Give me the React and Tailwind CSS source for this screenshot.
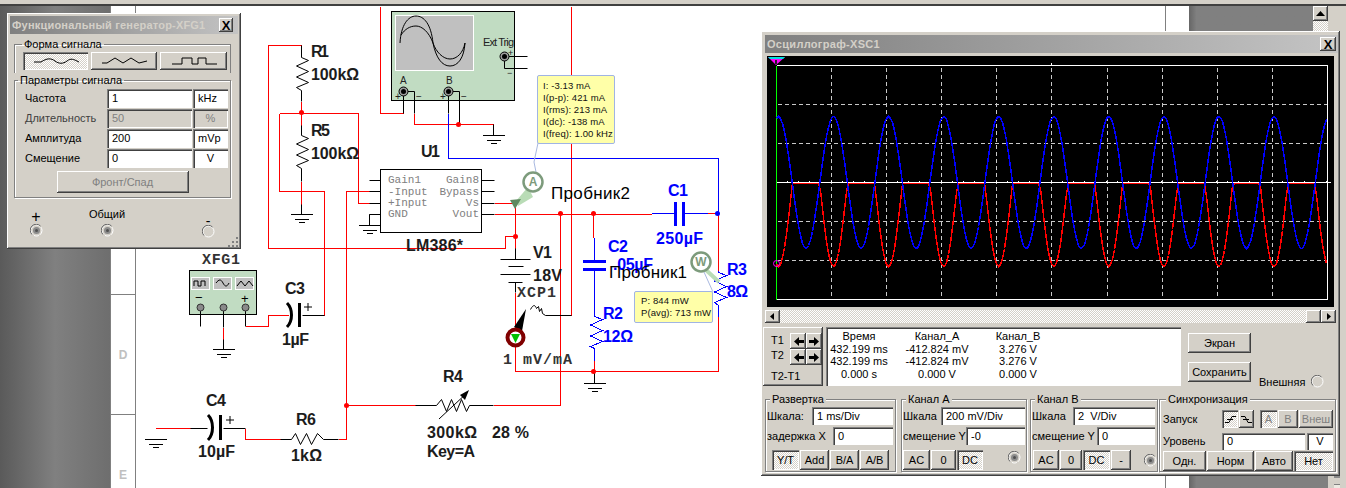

const raised = "shadow-[inset_-1px_-1px_0_#404040,inset_1px_1px_0_#fff,inset_-2px_-2px_0_#808080]";
const sunk = "shadow-[inset_1px_1px_0_#808080,inset_2px_2px_0_#404040,inset_-1px_-1px_0_#fff]";
const hatch = "bg-[repeating-conic-gradient(#ffffff_0_25%,#d4d0c8_0_50%)] bg-size-[2px_2px]";

function Btn({ w, h = "h-[20px]", on, dim, children }) {
  return (
    <div
      className={`${w} ${h} shrink-0 flex items-center justify-center ${on ? `${hatch} ${sunk}` : `bg-[#d4d0c8] ${raised}`} ${dim ? "text-[#808080]" : "text-black"}`}
    >
      {children}
    </div>
  );
}

function Field({ w, h = "h-[18px]", dim, center, children }) {
  return (
    <div
      className={`${w} ${h} shrink-0 flex items-center whitespace-pre ${center ? "justify-center" : "pl-[5px]"} ${sunk} ${dim ? "bg-[#d4d0c8] text-[#808080]" : "bg-white text-black"}`}
    >
      {children}
    </div>
  );
}

function Group({ title, className, children }) {
  return (
    <fieldset className={`min-w-0 shrink-0 border border-[#808080] shadow-[inset_1px_1px_0_#fff,1px_1px_0_#fff] pb-0 ${className}`}>
      <legend className="ml-[3px] px-[2px] h-[12px] leading-[12px] bg-[#d4d0c8]">{title}</legend>
      {children}
    </fieldset>
  );
}

function Terminal({ open }) {
  return (
    <svg width="13" height="13" viewBox="0 0 13 13">
      <circle cx="6.5" cy="6.5" r="5.5" fill="#d4d0c8" stroke="#fff" strokeDasharray={open ? "none" : "5 1"} />
      {!open && <circle cx="6.5" cy="6.5" r="3.5" fill="#8c8c8c" />}
      {!open && <circle cx="6.5" cy="6.5" r="1.5" fill="#505050" />}
      <path d="M2 10.5A5.5 5.5 0 0 1 10.5 2" fill="none" stroke="#666" />
    </svg>
  );
}

function Arrow({ right }) {
  return (
    <svg width="11" height="9" viewBox="0 0 11 9">
      <path d={right ? "M0 3h5V0l5 4.5L5 9V6H0z" : "M11 3H6V0L1 4.5 6 9V6h5z"} fill="#000" />
    </svg>
  );
}

function WaveForm({ d }) {
  return (
    <svg width="46" height="10" viewBox="0 0 46 10">
      <path d={d} fill="none" stroke="#000" />
    </svg>
  );
}

function GenRow({ label, value, unit, dim, unitCenter }) {
  return (
    <div className="flex items-center h-[19px] mb-[1px]">
      <span className={`w-[82px] ml-[10px] whitespace-nowrap ${dim ? "text-[#404040]" : ""}`}>{label}</span>
      <Field w="w-[85px]" h="h-[19px]" dim={dim}>{value}</Field>
      <Field w="w-[35px] ml-[1px]" h="h-[19px]" dim={dim} center={unitCenter}>{unit}</Field>
    </div>
  );
}

function GeneratorWindow() {
  return (
    <section className={`absolute left-[7px] top-[13px] w-[234px] h-[236px] p-[3px] bg-[#d4d0c8] flex flex-col text-[11px] text-black ${raised} font-['Liberation_Sans',sans-serif]`}>
      <header className="h-[18px] shrink-0 flex items-center justify-between pl-[2px] pr-[5px] bg-linear-to-r from-[#808080] to-[#c4c4c4]">
        <span className="text-[#d4d0c8] font-bold text-[11px] tracking-[0.2px] whitespace-nowrap">Функциональный генератор-XFG1</span>
        <Btn w="w-[14px]" h="h-[14px]"><span className="font-bold text-[13px] leading-none">X</span></Btn>
      </header>
      <div className="mt-[4px] ml-[4px] mr-[7px]">
        <fieldset className="min-w-0 border border-b-0 border-[#808080] shadow-[inset_1px_1px_0_#fff] pl-[8px] pr-[3px] h-[35px]">
          <legend className="ml-[-1px] px-[2px] h-[13px] leading-[13px]">Форма сигнала</legend>
          <div className="flex gap-[3px] pt-[1px]">
            <Btn w="w-[65px]" h="h-[18px]" on><WaveForm d="M1 6H8C14 2 18 2 22 5S30 8 34 5 40 3 46 6" /></Btn>
            <Btn w="w-[66px]" h="h-[18px]"><WaveForm d="M1 7H6L14 2 22 7 30 2 38 7 46 5" /></Btn>
            <Btn w="w-[67px]" h="h-[18px]"><WaveForm d="M1 8H11V2H21V8H27V2H35V8H46" /></Btn>
          </div>
        </fieldset>
        <fieldset className="min-w-0 border border-[#808080] shadow-[inset_1px_1px_0_#fff,1px_1px_0_#fff] h-[125px]">
          <legend className="ml-[3px] px-[2px] h-[14px] leading-[14px]">Параметры сигнала</legend>
          <div className="pt-[2px]">
            <GenRow label="Частота" value="1" unit="kHz" />
            <GenRow label="Длительность" value="50" unit="%" dim unitCenter />
            <GenRow label="Амплитуда" value="200" unit="mVp" />
            <GenRow label="Смещение" value="0" unit="V" unitCenter />
          </div>
          <div className="flex justify-center mt-[3px] pr-[0px]">
            <Btn w="w-[132px]" h="h-[22px]" dim>Фронт/Спад</Btn>
          </div>
        </fieldset>
      </div>
      <div className="flex items-end mt-[9px] h-[30px] shrink-0">
        <div className="flex flex-col items-center w-[14px] ml-[19px]"><span className="text-[16px] leading-[14px]">+</span><Terminal /></div>
        <div className="flex flex-col items-center w-[40px] ml-[44px]"><span className="leading-[15px] mb-[2px]">Общий</span><Terminal /></div>
        <div className="flex flex-col items-center w-[14px] ml-[74px] -mb-[1px]"><span className="text-[14px] leading-[8px]">-</span><Terminal open /></div>
      </div>
      <svg className="absolute right-[2px] bottom-[2px]" width="11" height="11" viewBox="0 0 11 11" fill="#808080">
        <rect x="8" y="1" width="2" height="2" /><rect x="8" y="5" width="2" height="2" /><rect x="4" y="5" width="2" height="2" />
        <rect x="8" y="9" width="2" height="2" /><rect x="4" y="9" width="2" height="2" /><rect x="0" y="9" width="2" height="2" />
      </svg>
    </section>
  );
}

function waves() {
  let blue = "";
  let red = "";
  for (let x = 776; x <= 1326; x += 2) {
    const c = Math.cos((2 * Math.PI * (x - 778)) / 55.05);
    const by = Math.round(182 - 66 * c);
    const ry = Math.round(183 + Math.max(0, 83 * c));
    blue += `${blue ? "L" : "M"}${x} ${by}`;
    red += `${red ? "L" : "M"}${x} ${ry}`;
  }
  return { blue, red };
}

function ScopeScreen() {
  const { blue, red } = waves();
  const vx = [831, 886, 941, 996, 1051, 1107, 1162, 1217, 1272];
  const hy = [104, 143, 221, 260];
  const ticks = [];
  for (let x = 787; x < 1328; x += 11) ticks.push(x);
  return (
    <div className="h-[251px] bg-black mx-[2px] mt-[3px]">
      <svg width="568" height="251" viewBox="767 56 568 251" className="block">
        <g transform="translate(.5 .5)" shapeRendering="crispEdges" fill="none" strokeWidth="1">
          {vx.map((x) => <path key={x} d={`M${x} 67V298`} stroke="#c8c8c8" strokeDasharray="4 3" />)}
          {hy.map((y) => <path key={y} d={`M777 ${y}H1327`} stroke="#c8c8c8" strokeDasharray="4 3" />)}
          <path d="M776 65H1327V299H776" stroke="#fff" />
          <path d="M776 182H1330" stroke="#fff" />
          {ticks.map((x) => <path key={x} d={`M${x} 180V182`} stroke="#fff" />)}
          <path d="M1051 62V65" stroke="#fff" />
          <path d="M776 65V299" stroke="#00ff00" />
          <path d={red} stroke="#ff0000" strokeWidth="1.5" />
          <path d={blue} stroke="#0000ff" strokeWidth="1.5" />
        </g>
        <path d="M768 57H785L776 65z" fill="#ff00ff" />
        <path d="M768 57H785L783 59H770z" fill="#00e0e0" />
        <rect x="775" y="60" width="2" height="4" fill="#222" />
        <circle cx="776.5" cy="263.5" r="3" fill="none" stroke="#ff00ff" />
      </svg>
    </div>
  );
}

function ScopeWindow() {
  return (
    <section className={`absolute left-[761px] top-[31px] w-[579px] h-[445px] p-[4px] bg-[#d4d0c8] flex flex-col text-[11px] text-black font-['Liberation_Sans',sans-serif] ${raised}`}>
      <header className="h-[18px] shrink-0 -mr-[2px] flex items-center justify-between pl-[2px] pr-[2px] bg-linear-to-r from-[#808080] to-[#c4c4c4]">
        <span className="text-[#d4d0c8] font-bold text-[11px] tracking-[0.3px]">Осциллограф-XSC1</span>
        <Btn w="w-[16px]" h="h-[14px]"><span className="font-bold text-[13px] leading-none">X</span></Btn>
      </header>
      <ScopeScreen />
      <div className={`flex h-[13px] mt-[3px] ${hatch}`}>
        <Btn w="w-[15px]" h="h-[13px]">
          <svg width="5" height="7"><path d="M4 0v7L0 3.5z" fill="#000" /></svg>
        </Btn>
        <div className="flex-1" />
        <Btn w="w-[15px]" h="h-[13px]"><span /></Btn>
        <Btn w="w-[15px]" h="h-[13px]">
          <svg width="5" height="7"><path d="M1 0v7l4-3.5z" fill="#000" /></svg>
        </Btn>
      </div>
      <div className="flex mt-[4px] h-[59px]">
        <div className={`w-[60px] -ml-[2px] h-[59px] flex bg-[#d4d0c8] ${raised}`}>
          <div className="w-[27px] pl-[8px] pt-[6px] flex flex-col leading-[15px]">
            <span>T1</span><span>T2</span><span className="mt-[6px] whitespace-nowrap">T2-T1</span>
          </div>
          <div className="pt-[6px] grid grid-cols-2 content-start">
            <Btn w="w-[16px]" h="h-[16px]"><Arrow /></Btn>
            <Btn w="w-[16px]" h="h-[16px]"><Arrow right /></Btn>
            <Btn w="w-[16px]" h="h-[16px]"><Arrow /></Btn>
            <Btn w="w-[16px]" h="h-[16px]"><Arrow right /></Btn>
          </div>
        </div>
        <div className={`w-[355px] ml-[3px] h-[59px] bg-white pt-[3px] pl-[3px] grid grid-cols-[60px_6px_84px_11px_56px] justify-start content-start text-center leading-[12.6px] ${sunk}`}>
          <span>Время</span><span /><span>Канал_А</span><span /><span>Канал_В</span>
          <span>432.199 ms</span><span /><span>-412.824 mV</span><span /><span>3.276 V</span>
          <span>432.199 ms</span><span /><span>-412.824 mV</span><span /><span>3.276 V</span>
          <span>0.000 s</span><span /><span>0.000 V</span><span /><span>0.000 V</span>
        </div>
        <div className="ml-[7px] w-[64px] flex flex-col gap-[9px] pt-[6px]">
          <Btn w="w-[63px]">Экран</Btn>
          <Btn w="w-[63px]">Сохранить</Btn>
        </div>
        <div className="ml-[7px] self-end flex items-center gap-[6px] whitespace-nowrap -mb-[4px]">
          <span>Внешняя</span><Terminal open />
        </div>
      </div>
      <div className="flex mt-[7px] h-[79px] leading-[18px]">
        <Group title="Развертка" className="w-[131px] px-[1px]">
          <div className="flex justify-between pt-[2px] pr-[1px]"><span>Шкала:</span><Field w="w-[81px]">1 ms/Div</Field></div>
          <div className="flex justify-between mt-[2px] pr-[1px]"><span className="whitespace-nowrap">задержка X</span><Field w="w-[60px]">0</Field></div>
          <div className="flex gap-[1px] mt-[5px] ml-[5px]">
            <Btn w="w-[27px]" on>Y/T</Btn><Btn w="w-[29px]">Add</Btn><Btn w="w-[29px]">B/A</Btn><Btn w="w-[29px]">A/B</Btn>
          </div>
        </Group>
        <Group title="Канал А" className="w-[126px] ml-[5px] px-[1px]">
          <div className="flex justify-between pt-[2px]"><span>Шкала</span><Field w="w-[84px]">200 mV/Div</Field></div>
          <div className="flex justify-between mt-[2px]"><span className="whitespace-nowrap">смещение Y</span><Field w="w-[59px]">-0</Field></div>
          <div className="flex items-center gap-[1px] mt-[5px]">
            <Btn w="w-[27px]">AC</Btn><Btn w="w-[25px]">0</Btn><Btn w="w-[26px]" on>DC</Btn>
            <span className="ml-[24px] -mt-[5px]"><Terminal /></span>
          </div>
        </Group>
        <Group title="Канал В" className="w-[128px] ml-[3px] px-[1px]">
          <div className="flex justify-between pt-[2px] pr-[1px]"><span>Шкала</span><Field w="w-[82px]">2  V/Div</Field></div>
          <div className="flex justify-between mt-[2px] pr-[1px]"><span className="whitespace-nowrap">смещение Y</span><Field w="w-[58px]">0</Field></div>
          <div className="flex items-center gap-[1px] mt-[5px] ml-[1px]">
            <Btn w="w-[26px]">AC</Btn><Btn w="w-[22px]">0</Btn><Btn w="w-[27px]" on>DC</Btn><Btn w="w-[20px]">-</Btn>
            <span className="ml-[12px]"><Terminal /></span>
          </div>
        </Group>
        <Group title="Синхронизация" className="w-[177px] ml-[1px] pl-[3px]">
          <div className="flex items-center pt-[5px]">
            <span className="w-[59px]">Запуск</span>
            <Btn w="w-[16px]" h="h-[18px]" on>
              <svg width="11" height="11"><path d="M0 8.5H4L7 2.5H11M2 5.5H8" fill="none" stroke="#000" /></svg>
            </Btn>
            <Btn w="w-[15px] ml-[1px]" h="h-[18px]">
              <svg width="11" height="11"><path d="M0 2.5H4L7 8.5H11M2 5.5H8" fill="none" stroke="#000" /></svg>
            </Btn>
            <Btn w="w-[17px] ml-[6px]" h="h-[18px]" on dim>A</Btn>
            <Btn w="w-[20px] ml-[1px]" h="h-[18px]" dim>B</Btn>
            <Btn w="w-[34px] ml-[1px]" h="h-[18px]" dim>Внеш</Btn>
          </div>
          <div className="flex items-center mt-[4px]">
            <span className="w-[59px]">Уровень</span>
            <Field w="w-[83px]" h="h-[17px]">0</Field>
            <Field w="w-[26px] ml-[2px]" h="h-[17px]" center>V</Field>
          </div>
          <div className="flex gap-[1px] mt-[1px]">
            <Btn w="w-[43px]">Одн.</Btn><Btn w="w-[47px]">Норм</Btn><Btn w="w-[38px]">Авто</Btn><Btn w="w-[39px]" on>Нет</Btn>
          </div>
        </Group>
      </div>
    </section>
  );
}

const RED = [
  "M380 6V113H403", "M414 113V124H493", "M301 45H268V248H505V236H515", "M279 113H358V203H369",
  "M279 113V191H324V248", "M369 191H346V439H338", "M346 405H415", "M493 405H560V213",
  "M494 203H515V248", "M494 214H651", "M707 213H718V270", "M571 6V315", "M593 213V237",
  "M594 295V315", "M594 360V371", "M515 292V371H718V316", "M301 101V125", "M301 181V204",
  "M288 315H268V326H245", "M223 327V339", "M155 428H190", "M245 428V439H280", "M324 315V248",
];
const BLUE = [
  "M448 113V158H718V213", "M651 213H675M683 213H707", "M594 237V260M594 270V295",
  "M594 295V316L602 319 590 324.500 602 330 590 335.500 602 341 590 346 594 348V360",
  "M718 270V272L726 275 714 280.500 726 286 714 291.500 726 297 714 302 718 305V316",
];
const BLACK = [
  "M403 91V113", "M403 91H414V113", "M459 124V91H448V113", "M493 124V135", "M504 56H527", "M504 56V68H527",
  "M301 45V57L308 60 296 65.500 308 71 296 76.500 308 82 296 87 301 90V101",
  "M301 125V135L308 138 296 143.500 308 149 296 154.500 308 160 296 165 301 168V181", "M301 204V214",
  "M369 180H380M369 191H380M369 203H380M369 214H380M481 180H494M481 191H494M481 203H494M481 214H494",
  "M380 214H369V225",
  "M515 248V259M500 259H530M508 266H523M500 274H530M508 282H522M515 282V292",
  "M594 371V383", "M545 315H571",
  "M530 309C533 303 535 305 536 308L538 306 539 311 541 308 542 313 545 315",
  "M200 307V326M223 307V327M223 339V349M245 307V326",
  "M302 315H324",
  "M190 428H207M223 428H245", "M280 439H291L295 433 300 444 306 433 311 444 317 433 323 439H338",
  "M415 405H436L441 399 446 411 451 399 456 411 461 399 466 411 469 405H493",
];
const NODES = [[301, 112], [458, 124], [515, 236], [560, 213], [593, 213], [346, 405], [593, 371]];
const GROUNDS = [[493, 135], [301, 214], [369, 225], [594, 383], [223, 349], [155, 439]];
const BOLD = [
  ["R1", 311, 57, 18], ["100kΩ", 311, 80, 48], ["R5", 311, 136, 19], ["100kΩ", 311, 159, 48], ["U1", 421, 157, 19],
  ["LM386*", 406, 251, 57], ["V1", 533, 258, 19], ["18V", 533, 281, 29], ["R4", 443, 382, 20], ["300kΩ", 427, 438, 50],
  ["28 %", 492, 438, 37], ["Key=A", 427, 457, 48], ["C3", 285, 294, 20], ["1µF", 282, 345, 27], ["C4", 206, 406, 20],
  ["10µF", 198, 457, 37], ["R6", 296, 425, 20], ["1kΩ", 291, 461, 31],
];
const BLUE_TEXT = [
  ["C1", 668, 196, 20], ["250µF", 656, 244, 47], ["C2", 608, 252, 20], [".05µF", 613, 270, 40],
  ["R3", 727, 275, 20], ["8Ω", 727, 297, 21], ["R2", 603, 319, 20], ["12Ω", 603, 342, 30],
];
const MONO = [["XFG1", 202, 264, 38], ["XCP1", 517, 297, 39], ["1 mV/mA", 503, 364, 69]];
const PINS_L = [["Gain1", 183], ["-Input", 195], ["+Input", 206], ["GND", 217]];
const PINS_R = [["Gain8", 183], ["Bypass", 195], ["Vs", 206], ["Vout", 217]];

function Schematic() {
  return (
    <svg className="absolute inset-0" width="1346" height="488" viewBox="0 0 1346 488">
      {/* instrument bodies */}
      <rect x="391.500" y="11.500" width="123" height="89" fill="#c1dcc2" stroke="#000" />
      <rect x="395.500" y="15.500" width="78" height="55" fill="#c0c0c0" stroke="#fff" />
      <path d="M400 43C401 25 408 16 416 16S431 24 433 43C436 58 442 66 450 66S464 58 465 43" fill="none" stroke="#000" />
      <path d="M401 35C405 29 410 26 416 26S429 32 433 43C436 52 443 59 450 59S463 53 465 43" fill="none" stroke="#000" />
      <rect x="189.500" y="270.500" width="67" height="44" fill="#c1dcc2" stroke="#000" />
      {[191, 213, 235].map((x) => <rect key={x} x={x + 0.5} y="277.500" width="18" height="12" fill="#c0c0c0" stroke="#fff" />)}
      <path d="M194 286V281H198V286H201V281H205V286" fill="none" stroke="#000" />
      <path d="M216 283C219 279 221 279 223 283S227 287 229 283" fill="none" stroke="#000" />
      <path d="M237 286L241 281 245 286 249 281 253 286" fill="none" stroke="#000" />
      <rect x="380.500" y="169.500" width="101" height="63" fill="#fff" stroke="#000" />

      <g transform="translate(.5 .5)" fill="none" strokeWidth="1" shapeRendering="crispEdges">
        {RED.map((d) => <path key={d} d={d} stroke="#ff0000" />)}
        {BLUE.map((d) => <path key={d} d={d} stroke="#0000ff" />)}
        {BLACK.map((d) => <path key={d} d={d} stroke="#000" shapeRendering="auto" />)}
        {GROUNDS.map(([x, y]) => (
          <path key={`${x}-${y}`} d={`M${x - 11} ${y}H${x + 11}M${x - 7} ${y + 5}H${x + 7}M${x - 3} ${y + 8}H${x + 3}`} stroke="#000" />
        ))}
      </g>
      {/* capacitors */}
      <path d="M675.500 202V226M683.500 202V226" stroke="#0000ff" strokeWidth="3" />
      <path d="M583 261.500H606M583 269.500H606" stroke="#0000ff" strokeWidth="3" />
      <path d="M299.500 303V327M220.500 415V440" stroke="#000" strokeWidth="3" />
      <path d="M287 303C293 309 293 321 287 327M208 415C214 421 214 434 208 440" fill="none" stroke="#000" strokeWidth="3" />
      <path d="M308 303V311M304 307H312M230 416V424M226 420H234" stroke="#000" />
      {/* R4 wiper */}
      <path d="M439 419L468 392" stroke="#000" />
      <path d="M469 390L460 395 465 400z" fill="#000" />
      {/* nodes */}
      {NODES.map(([x, y]) => <circle key={`${x}${y}`} cx={x + 0.5} cy={y + 0.5} r="2.500" fill="#ff0000" />)}
      <circle cx="717.500" cy="213.500" r="2.500" fill="#0000ff" />
      {/* terminals */}
      {[[403, 91], [448, 91], [504, 56]].map(([x, y]) => (
        <g key={x}>
          <circle cx={x + 0.5} cy={y + 0.5} r="4.500" fill="#9a9a9a" stroke="#000" />
          <circle cx={x + 0.5} cy={y + 0.5} r="2.500" fill="#000" />
        </g>
      ))}
      {[200, 223, 245].map((x) => <circle key={x} cx={x + 0.5} cy="307.500" r="3.500" fill="#8a8a8a" stroke="#333" />)}
      {/* probes */}
      <path d="M533 197L518 206 516 201 528 187z" fill="#b9dcb6" />
      <path d="M510 200L521 199 515 209z" fill="#5f8a60" />
      <path d="M536 172L534 162 538 143" fill="none" stroke="#a8b8e0" />
      <circle cx="533" cy="182" r="9.500" fill="#fff" stroke="#7d9b7c" strokeWidth="2.500" />
      <path d="M706 270L719 282" stroke="#b9dcb6" strokeWidth="4" />
      <path d="M704 272L713 292" stroke="#a8b8e0" />
      <circle cx="701" cy="262" r="9.500" fill="#fff" stroke="#7d9b7c" strokeWidth="2.500" />
      <path d="M526 309L514 327 522 331z" fill="#000" />
      <circle cx="515.500" cy="337.500" r="8" fill="#fff" stroke="#800000" strokeWidth="4" />
      <path d="M511 334H520L515.500 343z" fill="#00c000" />

      <g className="font-['Liberation_Sans',sans-serif]">
        <text x="533" y="186" textAnchor="middle" fontSize="12" fontWeight="700" fill="#7d9b7c">A</text>
        <text x="701" y="266" textAnchor="middle" fontSize="12" fontWeight="700" fill="#7d9b7c">W</text>
        <text x="483" y="46" fontSize="11" fill="#222" textLength="31">Ext Trig</text>
        <text x="400" y="84" fontSize="10" fill="#222">A</text>
        <text x="446" y="84" fontSize="10" fill="#222">B</text>
        <text x="395" y="100" fontSize="10" fill="#222">+</text>
        <text x="416" y="100" fontSize="10" fill="#222">−</text>
        <text x="440" y="100" fontSize="10" fill="#222">+</text>
        <text x="461" y="100" fontSize="10" fill="#222">−</text>
        <text x="508" y="56" fontSize="9" fill="#222">+</text>
        <text x="507" y="76" fontSize="9" fill="#222">−</text>
        <text x="195" y="302" fontSize="13" fill="#000">−</text>
        <text x="241" y="303" fontSize="13" fill="#000">+</text>
        {BOLD.map(([t, x, y, w]) => (
          <text key={`${t}${y}`} x={x} y={y} fontSize="16" fontWeight="700" fill="#1c1c1c" textLength={w}>{t}</text>
        ))}
        {BLUE_TEXT.map(([t, x, y, w]) => (
          <text key={t} x={x} y={y} fontSize="16" fontWeight="700" fill="#0000ff" textLength={w}>{t}</text>
        ))}
        <text x="551" y="199" fontSize="17" fill="#000" textLength="79">Пробник2</text>
        <text x="609" y="278" fontSize="17" fill="#000" textLength="78">Пробник1</text>
      </g>
      <g className="font-['Liberation_Mono',monospace]">
        {MONO.map(([t, x, y, w]) => (
          <text key={t} x={x} y={y} fontSize="15" fontWeight="700" fill="#333" textLength={w}>{t}</text>
        ))}
        {PINS_L.map(([t, y]) => <text key={t} x="388" y={y} fontSize="11" fill="#808080">{t}</text>)}
        {PINS_R.map(([t, y]) => <text key={t} x="479" y={y} fontSize="11" fill="#808080" textAnchor="end">{t}</text>)}
      </g>
    </svg>
  );
}

function Tip({ className, lines }) {
  return (
    <div className={`absolute bg-[#ffffa8] border border-[#a0b4e4] rounded-[2px] text-[9.5px] text-[#111] tracking-[0.1px] font-['Liberation_Sans',sans-serif] ${className}`}>
      {lines.map((l) => <div key={l} className="h-[12px] leading-[12px] whitespace-nowrap">{l}</div>)}
    </div>
  );
}

function SideIcons() {
  const rows = Array.from({ length: 30 });
  return (
    <div className="flex-1 flex flex-col gap-[6px] pt-[30px] pl-[6px] overflow-hidden">
      {rows.map((_, i) => (
        <div key={i} className={`w-[6px] h-[10px] shrink-0 ${i % 3 === 0 ? "bg-[#8a8a8a]" : "bg-[#ece9e2] border-y border-[#808080]"}`} />
      ))}
    </div>
  );
}

export default function App() {
  return (
    <div className="relative w-[1346px] h-[488px] overflow-hidden bg-white flex flex-col">
      <div className="h-[4px] bg-[#d4d0c8]" />
      <div className="h-[2px] bg-[#404040]" />
      <div className="flex flex-1 min-h-0">
        <div className="w-[110px] bg-linear-to-r from-[#5a5a5a] via-[#808080] to-[#6e6e6e]" />
        <div className="w-[26px] border-x border-[#808080] bg-white flex flex-col font-['Liberation_Sans',sans-serif] text-[12px] text-[#c0c0c0] font-bold">
          <div className="h-[289px] border-b border-[#808080]" />
          <div className="h-[120px] border-b border-[#808080] flex items-end justify-center pb-[50px]">D</div>
          <div className="flex-1 flex items-start justify-center pt-[51px]">E</div>
        </div>
        <div className="flex-1" />
        <div className="w-[24px] border-l border-[#808080] bg-white" />
        <div className="w-[124px] bg-linear-to-r from-[#666666] via-[#808080] via-[6%] to-[#808080]" />
        <div className="w-[15px] flex flex-col bg-[#808080]">
          <Btn w="w-[15px]" h="h-[15px]">
            <svg width="9" height="5"><path d="M0 5L4.500 0 9 5z" fill="#000" /></svg>
          </Btn>
          <div className={`h-[11px] ${hatch}`} />
        </div>
        <div className="w-[18px] bg-[#d4d0c8] flex">
          <SideIcons />
        </div>
      </div>
      <Schematic />
      <Tip className="left-[537px] top-[75px] w-[78px] h-[69px] pl-[5px] pt-[4px]" lines={["I: -3.13 mA", "I(p-p): 421 mA", "I(rms): 213 mA", "I(dc): -138 mA", "I(freq): 1.00 kHz"]} />
      <Tip className="left-[634px] top-[291px] w-[79px] h-[32px] pl-[6px] pt-[3px]" lines={["P: 844 mW", "P(avg): 713 mW"]} />
      <GeneratorWindow />
      <ScopeWindow />
    </div>
  );
}
